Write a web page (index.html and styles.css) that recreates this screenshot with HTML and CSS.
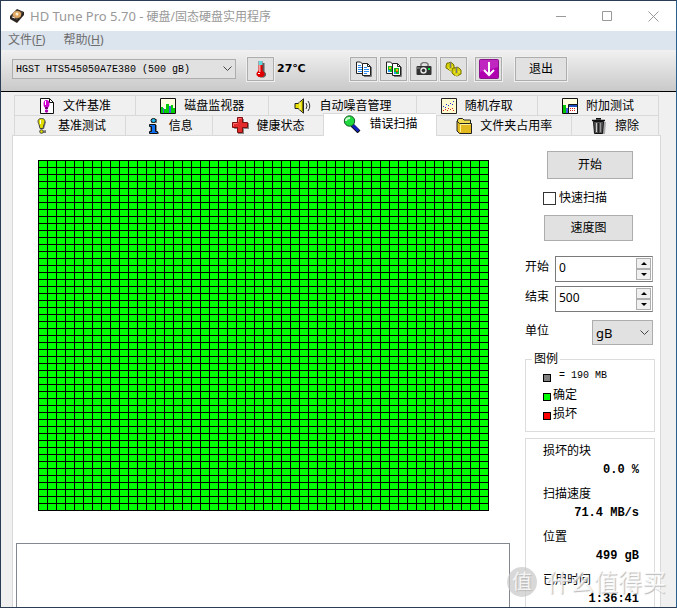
FILE: index.html
```html
<!DOCTYPE html>
<html lang="zh-CN">
<head>
<meta charset="UTF-8">
<meta name="viewport" content="width=device-width, initial-scale=1.0">
<title>HD Tune Pro 5.70</title>
<link rel="stylesheet" href="styles.css">
</head>
<body>
<div class="window">

<header class="titlebar">
  <svg class="app-icon" width="16" height="16" viewBox="0 0 16 16">
    <path d="M1 8 8 1l7 3v3l-7 8-7-4z" fill="#2b2522"/>
    <path d="M2 8 8 2l6 2-6 8z" fill="#5c4a3c"/>
    <ellipse cx="8" cy="6.500" rx="4.200" ry="3.600" fill="#e0a761"/>
    <circle cx="8" cy="6" r="1.500" fill="#fff0d8"/>
    <path d="M3 9l3 1" stroke="#e8e8e8"/>
  </svg>
  <h1><span>HD Tune Pro 5.70 -</span> 硬盘/固态硬盘实用程序</h1>
  <div class="window-buttons">
    <button title="最小化"><svg width="11" height="11"><path d="M0 5.500h10" stroke="#999"/></svg></button>
    <button title="最大化"><svg width="11" height="11"><path d="M.5.5h9v9h-9z" stroke="#999" fill="none"/></svg></button>
    <button title="关闭"><svg width="11" height="11"><path d="M.5.5l10 10M10.500.5l-10 10" stroke="#999"/></svg></button>
  </div>
</header>

<nav class="menubar">
  <a href="#">文件(<u>F</u>)</a>
  <a href="#">帮助(<u>H</u>)</a>
</nav>

<div class="toolbar">
  <div class="select drive">
    <select aria-label="硬盘"><option>HGST HTS545050A7E380 (500 gB)</option></select>
    <svg width="9" height="6"><path d="M.5.5l4 4 4-4" fill="none" stroke="#444"/></svg>
  </div>
  <button class="tool" title="温度">
    <svg width="12" height="18" viewBox="0 0 12 18">
      <path d="M4 2.500h4.500V11l1.500 2v2l-2 2H4l-2-2v-2l2-2z" fill="#222" transform="translate(1 .5)" opacity=".7"/>
      <path d="M3.500 1h4v9.500L9.500 13v2l-2 2h-4l-2-2v-2l2-2.500z" fill="#e00000"/>
      <path d="M3.500 1h4v4h-4z" fill="#5adbe0"/><path d="M4 5h1.500v7H4z" fill="#ff9b9b"/><path d="M3 13h2v1H3z" fill="#fff"/>
    </svg>
  </button>
  <span class="temperature">27℃</span>
  <button class="tool" title="复制文本">
    <svg width="17" height="16" viewBox="0 0 17 16">
      <path d="M1.500 1h4l2 2v9.500h-6z" fill="#fff" stroke="#222"/>
      <path d="M3 4.500h3M3 6.500h4M3 8.500h4M3 10.500h4" stroke="#2b8cf0"/>
      <path d="M16.500 6v9.500H9" stroke="#777" fill="none"/>
      <path d="M7.500 2.500h5l3 3v9h-8z" fill="#fff" stroke="#222"/><path d="M12.500 2.500v3h3" fill="none" stroke="#222"/>
      <path d="M9 6.500h3M9 8.500h5M9 10.500h5M9 12.500h3" stroke="#2b8cf0"/>
    </svg>
  </button>
  <button class="tool" title="复制截图">
    <svg width="17" height="16" viewBox="0 0 17 16">
      <path d="M1.500 1h4l2 2v9.500h-6z" fill="#fff" stroke="#222"/>
      <path d="M3 5h4v6H3z" fill="#0bbd21"/><path d="M3 9h2v2H3z" fill="#219cf0"/><path d="M4 6h2v2H4z" fill="#ffb000"/>
      <path d="M16.500 6v9.500H9" stroke="#777" fill="none"/>
      <path d="M7.500 2.500h5l3 3v9h-8z" fill="#fff" stroke="#222"/><path d="M12.500 2.500v3h3" fill="none" stroke="#222"/>
      <path d="M9 7h5v6H9z" fill="#0bbd21"/><path d="M9 11h2v2H9z" fill="#219cf0"/><path d="M11 8h2v2h-2z" fill="#ffb000"/><path d="M11 10h2v1h-2z" fill="#d33020"/>
    </svg>
  </button>
  <button class="tool" title="保存截图">
    <svg width="16" height="14" viewBox="0 0 16 14">
      <path d="M5 4V2l2-1.500h3L12 2v2" fill="none" stroke="#777" stroke-width="1.500"/>
      <rect x=".5" y="4" width="15" height="9" rx="1" fill="#333"/>
      <path d="M1 5h3v2H1z" fill="#666"/>
      <circle cx="7.500" cy="8.500" r="3.200" fill="#e8e8e8"/><circle cx="7.500" cy="8.500" r="1.800" fill="#333"/>
      <path d="M12 6h2v2h-2z" fill="#00e040"/>
    </svg>
  </button>
  <button class="tool" title="选项">
    <svg width="17" height="16" viewBox="0 0 17 16">
      <path d="M2 2h2l1-1 2 1 2 2v2l1 2-3 1-2 1-2-2-2-1V5z" fill="#d6d000" stroke="#777000"/>
      <path d="M8 7h2l2-1 2 1 2 2v2l0 2-2 1-2 1-3-1-2-2V9z" fill="#d6d000" stroke="#777000"/>
      <path d="M5.500 1v6M11.500 6v6" stroke="#777" stroke-width="1.500"/><path d="M3 7h1M7 6h1M9 11h1M13 11h2M4 9h3M10 14h3" stroke="#f6f260"/>
    </svg>
  </button>
  <button class="tool save" title="保存">
    <svg width="20" height="20" viewBox="0 0 20 20">
      <rect x=".5" y=".5" width="19" height="19" rx="1" fill="#b000b0" stroke="#8a148a"/>
      <path d="M1 1h18v7L1 13z" fill="#d454d4" opacity=".45"/>
      <path d="M10 3v12M5 11l5 5 5-5" fill="none" stroke="#fff" stroke-width="2"/>
    </svg>
  </button>
  <button class="tool exit">退出</button>
</div>

<main>
  <nav class="tabs">
    <div class="tab-row">
      <button>
        <svg width="16" height="16" viewBox="0 0 16 16">
          <path d="M1.500.5h9l4 4v11h-13z" fill="#fff" stroke="#111"/><path d="M10.500.5v4h4" fill="none" stroke="#111"/>
          <ellipse cx="7.500" cy="6" rx="3" ry="4" fill="#d000d0"/><path d="M6.500 3v4" stroke="#fff"/><path d="M6 9h3v2H6z" fill="#700070"/><circle cx="7.500" cy="13" r="1.700" fill="#b000b0"/>
        </svg>
        文件基准</button>
      <button>
        <svg width="16" height="16" viewBox="0 0 16 16">
          <path d="M.5.5h15v15H.5z" fill="#fffde0" stroke="#111"/>
          <path d="M1 9h2v6H1zM4 11h2v4H4zM6 6h3v9H6zM11 7h2v8h-2zM13 10h2v5h-2z" fill="#00d000"/>
          <path d="M3 10h1v5H3zM9 8h2v7H9z" fill="#4060e0"/>
        </svg>
        磁盘监视器</button>
      <button>
        <svg width="18" height="16" viewBox="0 0 18 16">
          <path d="M1 5.500h3L9.500.8v14.400L4 10.500H1z" fill="#e8e000" stroke="#222"/>
          <path d="M6 4v8" stroke="#fff8a0"/><path d="M8.500 3v10" stroke="#777000"/>
          <path d="M12 5q2 3 0 6M14 3q3.500 5 0 10" fill="none" stroke="#333"/>
        </svg>
        自动噪音管理</button>
      <button>
        <svg width="16" height="16" viewBox="0 0 16 16">
          <path d="M.5.5h15v15H.5z" fill="#fffbd0" stroke="#222"/>
          <path d="M2 8h1v1H2zM5 6h1v1H5zM7 7h1v1H7zM9 5h1v1H9zM11 6h1v1h-1zM12 3h1v1h-1zM4 9h1v1H4z" fill="#2030e0"/>
          <path d="M2 12h1v1H2zM4 11h1v1H4zM6 12h1v1H6zM7 10h1v1H7zM9 11h1v1H9zM11 10h1v1h-1zM12 12h1v1h-1z" fill="#e02020"/>
        </svg>
        随机存取</button>
      <button>
        <svg width="16" height="16" viewBox="0 0 16 16">
          <path d="M.5.5h15v15H.5z" fill="#fffde0" stroke="#111"/>
          <path d="M1 7h3v8H1z" fill="#00c800"/><path d="M4 10h2v5H4z" fill="#4060e0"/>
          <path d="M6.500 6.500h9v9h-9z" fill="#fff" stroke="#111"/><path d="M7 7h8v2H7z" fill="#2050c0"/>
          <path d="M8 10.500h6M8 12.500h6" stroke="#e02020" stroke-dasharray="1 1"/>
        </svg>
        附加测试</button>
    </div>
    <div class="tab-row">
      <button>
        <svg width="16" height="16" viewBox="0 0 16 16">
          <path d="M9 1l3 3-2 7H8zM8 13l4-1v3H8z" fill="#777"/>
          <path d="M7.500.5c4 0 4 3 2.500 6l-1 4H6l-1-4c-1.500-3-1.500-6 2.500-6z" fill="#e0dc00" stroke="#444"/>
          <path d="M6.500 2v4" stroke="#fff"/><circle cx="7.500" cy="13.500" r="1.800" fill="#e0dc00" stroke="#444"/>
        </svg>
        基准测试</button>
      <button>
        <svg width="16" height="16" viewBox="0 0 16 16">
          <path d="M6 1h6v4H6zM5 7h7v7h2v2H5z" fill="#888"/>
          <ellipse cx="8.500" cy="2.500" rx="2.500" ry="2" fill="#20b8f0" stroke="#111"/>
          <path d="M4.500 6.500h6v7h2v2h-8v-2h2v-5h-2z" fill="#1070f0" stroke="#111"/>
        </svg>
        信息</button>
      <button>
        <svg width="17" height="17" viewBox="0 0 17 17">
          <path d="M6 2h6v4h5v6h-5v5H6v-5H2z" fill="#888"/>
          <path d="M5.500.5h5v5h5v5h-5v5h-5v-5h-5v-5h5z" fill="#e32b2b" stroke="#7c1010"/>
          <path d="M6.500 5V1.500h3M1.500 9V6.500h4" fill="none" stroke="#ff7070"/>
        </svg>
        健康状态</button>
      <button class="active">
        <svg width="18" height="18" viewBox="0 0 18 18">
          <path d="M9 10l7 7" stroke="#111" stroke-width="4"/><path d="M9.500 10l6 6" stroke="#1020c0" stroke-width="3"/>
          <circle cx="6.500" cy="6" r="5.200" fill="#20d840" stroke="#175c24"/><path d="M3 6q0-3 4-3" fill="none" stroke="#c9ffd0" stroke-width="2"/>
        </svg>
        错误扫描</button>
      <button>
        <svg width="16" height="16" viewBox="0 0 16 16">
          <path d="M1.500 13V2l1-1.500h4L8 2h6.500v3" fill="#f0dc50" stroke="#222"/>
          <path d="M3.500 5.500h12v10h-12L1 13V3z" fill="#e3b920" stroke="#222"/>
          <path d="M4.500 14V6.500h10" fill="none" stroke="#fff090"/>
        </svg>
        文件夹占用率</button>
      <button>
        <svg width="16" height="16" viewBox="0 0 16 16">
          <path d="M4 4h11l-1 12H4z" fill="#aaa"/>
          <path d="M2.500 3.500h10l-1 12h-8z" fill="#555" stroke="#111"/><path d="M1 2.500h13M5 .8h5" stroke="#111" stroke-width="1.500"/>
          <path d="M5.500 5v9" stroke="#ccc"/><path d="M9.500 5v9" stroke="#999"/><path d="M7.500 5v10" stroke="#222"/>
        </svg>
        擦除</button>
    </div>
  </nav>

  <div class="panel">
    <section class="scan">
      <div class="block-map"></div>
      <div class="log"></div>
    </section>

    <aside class="side">
      <button class="start">开始</button>
      <label class="quick"><input type="checkbox">快速扫描</label>
      <button class="speed-map">速度图</button>

      <div class="field">
        <label for="from">开始</label>
        <div class="spinner">
          <input id="from" type="text" value="0">
          <div class="steps"><button class="up" title="增加"></button><button class="down" title="减少"></button></div>
        </div>
      </div>
      <div class="field">
        <label for="to">结束</label>
        <div class="spinner">
          <input id="to" type="text" value="500">
          <div class="steps"><button class="up" title="增加"></button><button class="down" title="减少"></button></div>
        </div>
      </div>
      <div class="field unit">
        <label for="unit">单位</label>
        <div class="select">
          <select id="unit"><option>gB</option></select>
          <svg width="9" height="6"><path d="M.5.5l4 4 4-4" fill="none" stroke="#444"/></svg>
        </div>
      </div>

      <fieldset class="legend">
        <legend>图例</legend>
        <ul>
          <li class="size"><i></i>= 190 MB</li>
          <li class="ok"><i></i>确定</li>
          <li class="bad"><i></i>损坏</li>
        </ul>
      </fieldset>

      <dl class="stats">
        <div><dt>损坏的块</dt><dd>0.0 %</dd></div>
        <div><dt>扫描速度</dt><dd>71.4 MB/s</dd></div>
        <div><dt>位置</dt><dd>499 gB</dd></div>
        <div><dt>已用时间</dt><dd>1:36:41</dd></div>
      </dl>
    </aside>
  </div>
</main>

<div class="watermark"><span class="badge">值</span><span>什么值得买</span></div>
</div>
</body>
</html>
```

FILE: styles.css
```css
* { box-sizing: border-box; }
body { margin: 0; font: 12px/18px "Noto Sans", "Noto Sans CJK SC", sans-serif; color: #000; }
button, input, select { font: inherit; color: inherit; margin: 0; padding: 0; border-radius: 0; }
button { background: #e1e1e1; border: 1px solid #adadad; }
svg { display: block; flex: none; }

.window { position: relative; display: flex; flex-direction: column; height: 100vh; overflow: hidden; background: #f0f0f0; border: 1px solid #2b3d52; border-right-color: #2a6090; }

/* title + menu */
.titlebar { display: flex; align-items: center; height: 30px; flex: none; padding-left: 8px; background: #fff; }
.titlebar h1 { flex: 1; margin: 0 0 0 5px; font-size: 12px; font-weight: normal; color: #999; white-space: nowrap; }
.titlebar h1 span { font-size: 13px; }
.window-buttons { display: flex; }
.window-buttons button { display: flex; align-items: center; justify-content: center; width: 46px; height: 30px; background: none; border: none; }
.menubar { display: flex; gap: 18px; height: 19px; flex: none; padding-left: 7px; background: #dce4ed; }
.menubar a { color: #6d6d6d; text-decoration: none; }

/* toolbar */
.toolbar { display: flex; align-items: center; height: 42px; flex: none; padding: 0 11px 4px; background: linear-gradient(#f1f1f1, #c9c9c9); border-bottom: 1px solid #000; }
.tool { display: flex; align-items: center; justify-content: center; width: 27px; height: 24px; margin-right: 3px; box-shadow: 0 0 0 1px #efefef; }
.tool.save { margin-left: 5px; margin-right: 13px; }
.tool.exit { width: 52px; }
.temperature { width: 73px; font: bold 11px/18px "DejaVu Sans", "Noto Sans CJK SC", sans-serif; }
.select { position: relative; }
.select select { width: 100%; height: 100%; appearance: none; background: #e1e1e1; border: 1px solid #adadad; }
.select svg { position: absolute; right: 4px; top: 50%; margin-top: -3px; pointer-events: none; }
.drive { width: 224px; height: 20px; margin-right: 11px; }
.drive select { padding-left: 3px; font: 10px "Liberation Mono", monospace; }

/* tabs */
main { display: flex; flex-direction: column; flex: 1; min-height: 0; padding: 3px 15px 0 11px; }
.tabs { margin: 0 2px; }
.tab-row { display: flex; height: 20px; }
.tab-row button { display: flex; flex: 1 1 auto; align-items: center; justify-content: center; gap: 8px; background: none; border: 1px solid #d9d9d9; border-width: 1px 0 0 1px; white-space: nowrap; }
.tab-row button:last-child { border-right-width: 1px; }
.tab-row .active { position: relative; margin: -2px 0 -1px; padding: 0 0 2px; background: #fff; }

.panel { display: flex; flex: 1; min-height: 0; gap: 15px; padding: 0 5px 0 3px; background: #fff; border: 1px solid #d9d9d9; border-bottom: none; }
.scan { display: flex; flex-direction: column; flex: 1; }
.block-map { flex: none; width: 451px; height: 351px; margin: 24px 0 32px 22px; background: linear-gradient(90deg, #000 1px, transparent 1px) 0 0 / 9px 7px, linear-gradient(#000 1px, #0f0 1px) 0 0 / 9px 7px; }
.log { flex: 1; border: 1px solid #828790; border-bottom: none; }

/* right side */
.side { display: flex; flex-direction: column; width: 130px; padding-top: 15px; }
.start { flex: none; height: 28px; margin: 0 22px; }
.quick { display: flex; flex: none; align-items: center; gap: 3px; margin: 10px 0 8px 18px; }
.quick input { appearance: none; width: 13px; height: 13px; background: #fff; border: 1px solid #333; }
.speed-map { flex: none; height: 26px; margin: 0 22px 15px 19px; }
.field { display: flex; flex: none; justify-content: space-between; height: 26px; margin-bottom: 4px; padding-right: 2px; }
.field label { padding-top: 2px; }
.spinner { display: flex; width: 98px; border: 1px solid #7a7a7a; border-right-color: #adadad; }
.spinner input { flex: 1; min-width: 0; padding: 0 0 2px 3px; border: none; background: #fff; }
.steps { display: flex; flex-direction: column; width: 17px; padding: 1px; }
.steps button { display: flex; flex: 1; align-items: center; justify-content: center; background: #f0f0f0; }
.steps button::before { content: ""; border: 3px solid transparent; }
.steps .up::before { border-top: none; border-bottom-color: #000; }
.steps .down::before { border-bottom: none; border-top-color: #000; }
.unit { height: 25px; margin: 4px 0 7px; }
.unit .select { width: 61px; }
.unit select { padding-left: 3px; font-size: 13px; }

.legend { flex: none; height: 80px; margin: 0; padding: 0 17px; border: 1px solid #dcdcdc; }
.legend legend { margin-left: -11px; padding: 0 2px; line-height: 14px; }
.legend ul { margin: 0; padding: 0; list-style: none; }
.legend li { display: flex; align-items: center; gap: 2px; height: 19px; }
.legend i { width: 8px; height: 8px; margin-top: 4px; border: 1px solid #000; }
.size i { background: #808080; }
.ok i { background: #0f0; }
.bad i { background: #f00; }
.legend .size { gap: 8px; font: 10px "Liberation Mono", monospace; }

.stats { flex: 1; margin: 6px 0 0; padding: 2px 15px 0 17px; border: 1px solid #dcdcdc; border-bottom: none; }
.stats div { height: 43px; }
.stats dt { line-height: 20px; }
.stats dd { margin: 0; text-align: right; font: bold 12px/18px "Liberation Mono", monospace; }

.watermark { position: absolute; right: 10px; bottom: 10px; display: flex; align-items: center; gap: 9px; font-size: 24px; line-height: 30px; color: rgba(255, 255, 255, 0.8); text-shadow: 1px 1px 1px #bbb; }
.badge { width: 30px; height: 30px; border-radius: 50%; background: rgba(200, 200, 200, 0.7); font-size: 20px; text-align: center; }
```
